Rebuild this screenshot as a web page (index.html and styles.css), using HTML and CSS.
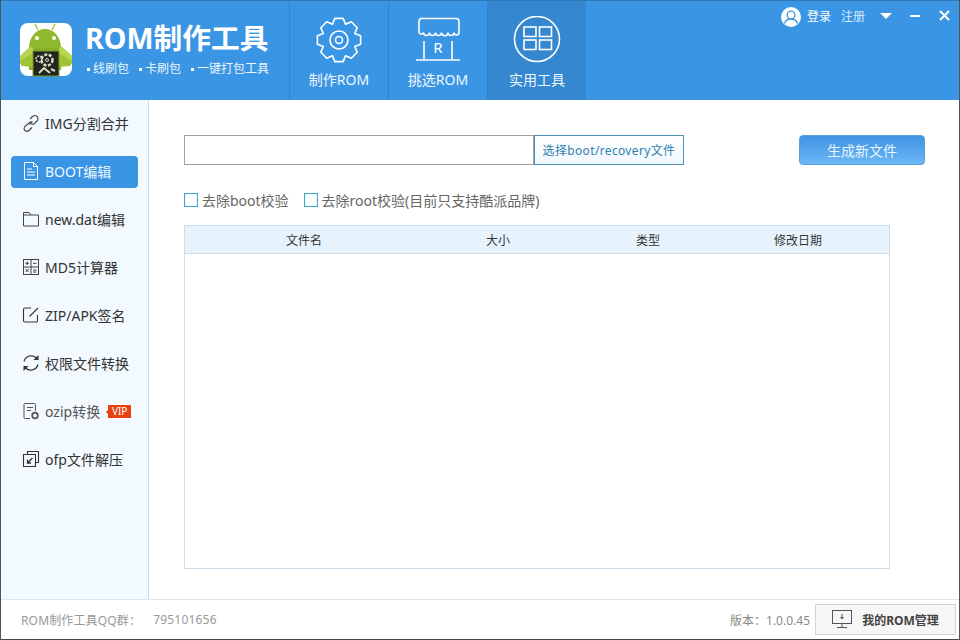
FILE: index.html
```html
<!DOCTYPE html>
<html>
<head>
    <meta charset="UTF-8">
    <title>ROM制作工具</title>
    <link rel="stylesheet" href="styles.css">
</head>
<body>
<div class="window">
    <div class="header">
        <div class="logo-icon">
            <svg width="53" height="54" viewBox="0 0 53 54">
                <rect x="0" y="0" width="52" height="53" rx="8" fill="#fff"/>
                <path d="M15 1l3 6M35 1l-3 6" stroke="#a5c93c" stroke-width="1.500"/>
                <path d="M9 25c0-11 7-19 16-19s16 8 16 19z" fill="#8fb82e"/>
                <circle cx="17" cy="15" r="2" fill="#fff"/>
                <circle cx="34" cy="15" r="2" fill="#fff"/>
                <path d="M9 25h32v22H9z" fill="#8ab028"/>
                <path d="M0 33l10-9 3 1v19l-11-1-2-3z" fill="#9cc434"/>
                <path d="M52 33l-10-9-3 1v19l11-1 2-3z" fill="#9cc434"/>
                <path d="M0 33l10-9 3 1v5L0 38zM52 33l-10-9-3 1v5l13 8z" fill="#b8d655"/>
                <rect x="13" y="28" width="26" height="25" fill="#23261a" stroke="#7d9a2a"/>
                <g fill="none" stroke="#d9d9d0">
                    <circle cx="27" cy="37" r="5.500" stroke-width="2.500" stroke-dasharray="3 1.500"/>
                    <circle cx="27" cy="37" r="1.500" stroke-width="1"/>
                    <circle cx="19" cy="36" r="3" stroke-width="1.500" stroke-dasharray="2 1"/>
                    <path d="M19 50l5-5 6 5M31 46l4 2" stroke-width="2"/>
                </g>
            </svg>
        </div>
        <div class="logo-text">
            <div class="logo-title">ROM制作工具</div>
            <div class="logo-sub">
                <span class="logo-point">线刷包</span>
                <span class="logo-point">卡刷包</span>
                <span class="logo-point">一键打包工具</span>
            </div>
        </div>
        <div class="tabs">
            <div class="tab">
                <svg width="48" height="48" viewBox="0 0 48 48" fill="none" stroke="#fff" stroke-width="1.600">
                    <polygon stroke-linejoin="round" points="19.800,2.400 28.200,2.400 30.500,8.300 36.300,5.800 42.200,11.700 39.700,17.500 45.600,19.800 45.600,28.200 39.700,30.500 42.200,36.300 36.300,42.200 30.500,39.700 28.200,45.600 19.800,45.600 17.500,39.700 11.700,42.200 5.800,36.300 8.300,30.500 2.400,28.200 2.400,19.800 8.300,17.500 5.800,11.700 11.700,5.800 17.500,8.300"/>
                    <circle cx="24" cy="24" r="9"/>
                    <circle cx="24" cy="24" r="3.500"/>
                </svg>
                <span>制作ROM</span>
            </div>
            <div class="tab">
                <svg width="48" height="48" viewBox="0 0 48 48" fill="none" stroke="#fff" stroke-width="1.600">
                    <path d="M6 2.500h36a3 3 0 0 1 3 3v11a2.500 2.500 0 0 1-5 0 3 3 0 0 1-6 0 3 3 0 0 1-6.500 0 3 3 0 0 1-6 0 3 3 0 0 1-6 0 3 3 0 0 1-6 0 2.500 2.500 0 0 1-4.500 0V5.500a3 3 0 0 1 3-3z"/>
                    <path d="M10 25v18M38 25v18M2 44h44"/>
                    <text x="24" y="37" text-anchor="middle" class="store-letter">R</text>
                </svg>
                <span>挑选ROM</span>
            </div>
            <div class="tab tab-active">
                <svg width="48" height="48" viewBox="0 0 48 48" fill="none" stroke="#fff" stroke-width="1.600">
                    <circle cx="24" cy="23" r="22.500"/>
                    <rect x="11" y="11" width="12" height="9.500"/>
                    <rect x="26.500" y="11" width="12" height="9.500"/>
                    <rect x="11" y="24" width="12" height="9.500"/>
                    <rect x="26.500" y="24" width="12" height="9.500"/>
                </svg>
                <span>实用工具</span>
            </div>
        </div>
        <div class="top-right">
            <svg width="20" height="20" viewBox="0 0 20 20">
                <circle cx="10" cy="10" r="10" fill="#fff"/>
                <circle cx="10" cy="8" r="3.800" fill="none" stroke="#3a96e4" stroke-width="1.300"/>
                <path d="M3.500 16.500c1-3.500 3.500-4.500 6.500-4.500s5.500 1 6.500 4.500" fill="none" stroke="#3a96e4" stroke-width="1.300"/>
            </svg>
            <span class="login">登录</span>
            <span class="register">注册</span>
            <span class="arrow"></span>
            <span class="minimize"></span>
            <svg class="close" width="11" height="11" viewBox="0 0 11 11">
                <path d="M1 1l9 9M10 1l-9 9" stroke="#fff" stroke-width="2"/>
            </svg>
        </div>
    </div>

    <div class="middle">
        <div class="sidebar">
            <div class="side-item">
                <svg width="18" height="18" viewBox="0 0 18 18" fill="none" stroke="#444" stroke-width="1.100">
                    <path d="M7.500 10.500l3-3M8 5l2.500-2.500a3 3 0 0 1 4.500 0 3 3 0 0 1 0 4.500L12.500 9.500a3 3 0 0 1-3 .5M10 8a3 3 0 0 0-2 .2L3 12.500a3 3 0 0 0 0 4 3 3 0 0 0 4 0l3-3"/>
                </svg>
                <span>IMG分割合并</span>
            </div>
            <div class="side-item side-active">
                <svg width="18" height="18" viewBox="0 0 18 18" fill="none" stroke="#fff" stroke-width="1">
                    <path d="M2.500 .5h9l4 4v13h-13zM11.500 .5v4h4M5 7h5M5 10h8M5 13h8"/>
                </svg>
                <span>BOOT编辑</span>
            </div>
            <div class="side-item">
                <svg width="18" height="18" viewBox="0 0 18 18" fill="none" stroke="#444" stroke-width="1">
                    <path d="M1.500 2.500h5.500l2 2.500h7.500v11h-15zM1.500 5h7.500"/>
                </svg>
                <span>new.dat编辑</span>
            </div>
            <div class="side-item">
                <svg width="18" height="18" viewBox="0 0 18 18" fill="none" stroke="#444" stroke-width="1">
                    <rect x="1.500" y="1.500" width="15" height="15"/>
                    <path d="M9 1.500v15M1.500 9h15M3.500 5.300h3.500M5.200 3.500v3.500M11 5.300h3.500M3.600 11l3 3M6.600 11l-3 3M11 12h3.500M11 14h3.500"/>
                </svg>
                <span>MD5计算器</span>
            </div>
            <div class="side-item">
                <svg width="18" height="18" viewBox="0 0 18 18" fill="none" stroke="#333" stroke-width="1.100">
                    <path d="M9 2H3a1.500 1.500 0 0 0-1.500 1.500v11A1.500 1.500 0 0 0 3 16h11a1.500 1.500 0 0 0 1.500-1.500V9M7.500 10.500L16 2"/>
                </svg>
                <span>ZIP/APK签名</span>
            </div>
            <div class="side-item">
                <svg width="18" height="18" viewBox="0 0 18 18" fill="none" stroke="#333" stroke-width="1.200">
                    <path d="M2 7.500a7.500 7.500 0 0 1 13-3M16 10.500a7.500 7.500 0 0 1-13 3"/>
                    <path d="M16.500 1v5h-5zM1.500 17v-5h5z" fill="#333" stroke="none"/>
                </svg>
                <span>权限文件转换</span>
            </div>
            <div class="side-item side-vip">
                <svg width="18" height="18" viewBox="0 0 18 18" fill="none" stroke="#555" stroke-width="1">
                    <path d="M8 16.500H3a1 1 0 0 1-1-1v-13a1 1 0 0 1 1-1h9.500a1 1 0 0 1 1 1V9M5 5.500h6M5 8.500h4"/>
                    <circle cx="13" cy="13.500" r="2.800" stroke-width="1.800"/>
                </svg>
                <span>ozip转换</span>
                <span class="vip">VIP</span>
            </div>
            <div class="side-item">
                <svg width="18" height="18" viewBox="0 0 18 18" fill="none" stroke="#333" stroke-width="1.100">
                    <path d="M5.500 4.500V1.500h11v11h-3M1.500 4.500h12v12h-12z"/>
                    <path d="M10.500 8l-5 5M5.500 9.500V13H9" stroke-width="1.300"/>
                </svg>
                <span>ofp文件解压</span>
            </div>
        </div>

        <div class="content">
            <div class="file-row">
                <input type="text" class="file-input">
                <button class="file-button">选择boot/recovery文件</button>
                <button class="make-button">生成新文件</button>
            </div>
            <div class="check-row">
                <label class="check"><span class="check-box"></span>去除boot校验</label>
                <label class="check"><span class="check-box"></span>去除root校验(目前只支持酷派品牌)</label>
            </div>
            <div class="table-box">
                <div class="table-head">
                    <span class="col-name">文件名</span>
                    <span class="col-size">大小</span>
                    <span class="col-type">类型</span>
                    <span class="col-date">修改日期</span>
                </div>
            </div>
        </div>
    </div>

    <div class="footer">
        <span class="qq-label">ROM制作工具QQ群：</span>
        <span class="qq-num">795101656</span>
        <span class="version">版本：1.0.0.45</span>
        <button class="manage-button">
            <svg width="20" height="19" viewBox="0 0 20 19" fill="none" stroke="#555" stroke-width="1">
                <rect x=".5" y=".5" width="19" height="13"/>
                <path d="M5 17.500h10M10 14v3.500M10 4v4" />
                <path d="M8 7h4l-2 2.500z" fill="#555" stroke="none"/>
            </svg>
            <span>我的ROM管理</span>
        </button>
    </div>
</div>
</body>
</html>
```
FILE: styles.css
```css
/* Genel */
body {
    margin: 0;
    font-family: "Noto Sans", "Noto Sans CJK SC", sans-serif;
    background-color: white;
}

.window {
    width: 960px;
    height: 640px;
    box-sizing: border-box;
    display: flex;
    flex-direction: column;
    border-left: 1px solid #4a5560;
    border-right: 1px solid #4a5560;
    border-bottom: 1px solid #4a4a4a;
    overflow: hidden;
}

/* Header */
.header {
    height: 100px;
    flex-shrink: 0;
    box-sizing: border-box;
    display: flex;
    margin: 0 -1px;
    background-color: #3a96e4;
    border: 1px solid #2f78b8;
    border-bottom: none;
    color: white;
}

.logo-icon {
    width: 72px;
    padding: 22px 0 0 19px;
    box-sizing: border-box;
    margin-right: -3px;
}

.logo-text {
    width: 200px;
    padding: 17px 0 0 17px;
    box-sizing: border-box;
    margin-left: -2px;
}

.logo-title {
    font-size: 28.7px;
    font-weight: bold;
    line-height: 40px;
    white-space: nowrap;
}

.logo-sub {
    display: flex;
    gap: 10px;
    font-size: 12px;
    line-height: 18px;
    margin: 2px 0 0 2px;
    white-space: nowrap;
    color: #eaf5ff;
}

.logo-point::before {
    content: "";
    display: inline-block;
    width: 3px;
    height: 3px;
    background-color: white;
    margin-right: 3px;
    vertical-align: middle;
}

.tabs {
    display: flex;
    margin-left: 21px;
    height: 99px;
}

.tab {
    width: 99px;
    box-sizing: border-box;
    border-left: 1px solid #3285cd;
    display: flex;
    flex-direction: column;
    align-items: center;
    padding-top: 15px;
    font-size: 14px;
    color: #eef7ff;
    white-space: nowrap;
}

.tab span {
    margin-top: 6px;
    line-height: 20px;
}

.tab-active {
    background-color: #3587d0;
}

.store-letter {
    font-size: 15px;
    fill: #fff;
    stroke: none;
}

.top-right {
    flex: 1;
    display: flex;
    align-items: flex-start;
    padding: 6px 0 0 195px;
    font-size: 12px;
    white-space: nowrap;
}

.login {
    margin-left: 6px;
    line-height: 20px;
}

.register {
    margin-left: 10px;
    line-height: 20px;
    color: #d9ecfc;
}

.arrow {
    margin: 6px 0 0 15px;
    border-left: 6px solid transparent;
    border-right: 6px solid transparent;
    border-top: 6px solid white;
}

.minimize {
    width: 10px;
    height: 2px;
    background-color: white;
    margin: 8px 0 0 18px;
}

.close {
    margin: 3px 0 0 19px;
}

/* Orta bolum */
.middle {
    flex: 1;
    display: flex;
    min-height: 0;
}

.sidebar {
    width: 148px;
    box-sizing: border-box;
    background-color: #f2f9ff;
    border-right: 1px solid #c5d9ea;
    padding: 8px 10px 0 10px;
}

.side-item {
    height: 32px;
    box-sizing: border-box;
    margin-bottom: 16px;
    padding-bottom: 2px;
    display: flex;
    align-items: center;
    gap: 5px;
    padding-left: 11px;
    border-radius: 4px;
    font-size: 14px;
    color: #333;
    white-space: nowrap;
}

.side-active {
    background-color: #3a96e4;
    color: #eef7ff;
}

.side-vip {
    color: #555;
}

.vip {
    position: relative;
    background-color: #e8410e;
    color: white;
    font-size: 10px;
    line-height: 13px;
    width: 23px;
    text-align: center;
    margin-left: 3px;
}

.vip::before {
    content: "";
    position: absolute;
    left: -2px;
    top: 5px;
    border-top: 2px solid transparent;
    border-bottom: 2px solid transparent;
    border-right: 2px solid #e8410e;
}

.content {
    flex: 1;
    padding: 35px 34px 30px 35px;
    display: flex;
    flex-direction: column;
    background-color: white;
}

.file-row {
    display: flex;
    height: 30px;
}

.file-input {
    width: 350px;
    height: 30px;
    box-sizing: border-box;
    border: 1px solid #a0a0a0;
    padding: 0;
    margin: 0;
    outline: none;
}

.file-button {
    width: 150px;
    height: 30px;
    border: 1px solid #4d8fb5;
    background: linear-gradient(#ffffff, #f0f8fe);
    color: #2f7fb0;
    font-family: inherit;
    font-size: 12px;
    letter-spacing: .35px;
    padding: 0;
}

.make-button {
    width: 126px;
    height: 30px;
    margin-left: 115px;
    border: 1px solid #5a9fd8;
    border-radius: 4px;
    background: linear-gradient(#3f94e2, #6cb6f6);
    color: #e8f4ff;
    font-family: inherit;
    font-size: 14px;
    padding: 0;
}

.check-row {
    display: flex;
    gap: 15px;
    margin-top: 25px;
    height: 20px;
    align-items: center;
    font-size: 14px;
    color: #666;
}

.check {
    display: flex;
    align-items: center;
    gap: 4px;
}

.check-box {
    width: 12px;
    height: 12px;
    border: 1px solid #4aa8cf;
    background-color: #fff;
    box-shadow: inset 0 0 2px #b8dfee;
}

.table-box {
    width: 706px;
    height: 344px;
    flex-shrink: 0;
    box-sizing: border-box;
    margin-top: 15px;
    border: 1px solid #cfdde9;
}

.table-head {
    height: 28px;
    box-sizing: border-box;
    display: flex;
    align-items: center;
    background-color: #e7f3fc;
    border-bottom: 1px solid #cfdde9;
    font-size: 12px;
    color: #333;
}

.table-head span {
    text-align: center;
}

.col-name {
    width: 238px;
}

.col-size {
    width: 150px;
    margin-left: 0;
}

.col-type {
    width: 150px;
}

.col-date {
    width: 150px;
}

/* Alt bar */
.footer {
    height: 40px;
    flex-shrink: 0;
    box-sizing: border-box;
    display: flex;
    align-items: center;
    background-color: white;
    border-top: 1px solid #dfe5ea;
    padding: 0 3px 0 20px;
    font-size: 12px;
    color: #999;
    white-space: nowrap;
}

.qq-label {
    letter-spacing: .15px;
}

.qq-num {
    margin-left: 12px;
    letter-spacing: .2px;
}

.version {
    margin-left: auto;
    color: #888;
}

.manage-button {
    width: 141px;
    height: 31px;
    margin-left: 5px;
    border: 1px solid #d4d4d4;
    background-color: #f6f6f6;
    display: flex;
    align-items: center;
    justify-content: center;
    gap: 10px;
    font-family: inherit;
    font-size: 12px;
    font-weight: bold;
    color: #444;
    padding: 0;
}
```
